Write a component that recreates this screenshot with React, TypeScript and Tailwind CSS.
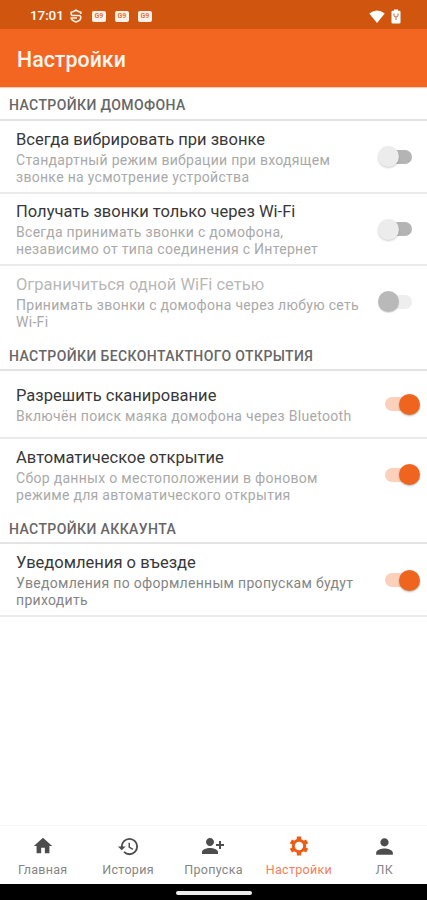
import clsx from "clsx";
import type { ReactNode } from "react";
import { MdHistory, MdHome, MdPerson, MdPersonAddAlt1 } from "react-icons/md";

type SwitchState = "off" | "on" | "disabled";

function Switch({ state }: { state: SwitchState }) {
  const on = state === "on";
  return (
    <div className={clsx("flex shrink-0 items-center", on ? "mr-[7px] w-[35px] flex-row-reverse" : "mr-[15px] w-[34px]")}>
      <div
        className={clsx(
          "relative z-10 size-[21px] shrink-0 rounded-full",
          on && "bg-[#ef651f] shadow-[0_1px_2px_rgba(0,0,0,0.3)]",
          state === "off" && "bg-[#ececec] shadow-[0_1px_2px_rgba(0,0,0,0.2)]",
          state === "disabled" && "bg-[#b9b9b9] shadow-[0_1px_1px_rgba(0,0,0,0.15)]",
        )}
      />
      <div
        className={clsx(
          "h-[14px] shrink-0 rounded-full",
          on ? "-mr-[10px] w-[24px] bg-[#fcd0bb]" : "-ml-[10px] w-[23px]",
          state === "off" && "bg-[#b4b4b4]",
          state === "disabled" && "bg-[#eeeeee]",
        )}
      />
    </div>
  );
}

function Section({ title, className, children }: { title: string; className: string; children: ReactNode }) {
  return (
    <section>
      <h2 className={clsx("border-b-2 border-[#e3e3e3] pl-[9px] text-[14px] leading-4 font-medium tracking-[0.4px] whitespace-nowrap text-[#666666]", className)}>
        {title}
      </h2>
      {children}
    </section>
  );
}

type RowProps = {
  title: string;
  lines: string[];
  state: SwitchState;
  className: string;
  titleClass?: string;
  textClass?: string;
};

function Row({ title, lines, state, className, titleClass = "text-[#383838]", textClass = "text-[#a9a9a9]" }: RowProps) {
  return (
    <div className={clsx("flex items-center justify-between pl-4", className)}>
      <div className="pt-px whitespace-nowrap">
        <p className={clsx("mb-px text-[16.5px] leading-[22px] tracking-[0.02px]", titleClass)}>{title}</p>
        {lines.map((line) => (
          <p key={line} className={clsx("text-[14px] leading-[17px] tracking-[0.3px]", textClass)}>
            {line}
          </p>
        ))}
      </div>
      <Switch state={state} />
    </div>
  );
}

function GearIcon() {
  return (
    <svg viewBox="0 0 20 20" className="size-5" fill="none" stroke="currentColor">
      <circle cx="10" cy="10" r="5.7" strokeWidth="3" />
      <path
        d="M10 3.8V.5M10 16.2v3.3M4.6 6.9 1.9 5.3M15.4 13.1l2.7 1.6M15.4 6.9l2.7-1.6M4.6 13.1l-2.7 1.6"
        strokeWidth="4.4"
      />
    </svg>
  );
}

const tabs = [
  { label: "Главная", icon: <MdHome size={22} /> },
  { label: "История", icon: <MdHistory size={23} /> },
  { label: "Пропуска", icon: <MdPersonAddAlt1 size={24} /> },
  { label: "Настройки", icon: <GearIcon />, active: true },
  { label: "ЛК", icon: <MdPerson size={25} /> },
];

function Badge() {
  return (
    <span className="flex h-[11px] w-[14px] items-center justify-center rounded-[2px] bg-[#fff1e8] text-[7px] leading-none font-bold text-[#d9773f]">
      G9
    </span>
  );
}

export default function App() {
  return (
    <div className="flex h-[900px] w-[427px] flex-col overflow-hidden bg-white font-[Roboto,sans-serif]">
      <div className="flex h-[29px] shrink-0 items-center bg-[#d0560f] pt-[3px] pr-[26px] pl-[30px] text-white">
        <span className="w-[40px] text-[13.5px] leading-none font-medium tracking-[-0.1px] whitespace-nowrap">17:01</span>
        <svg viewBox="0 0 12 14" className="mr-[10px] h-[14px] w-3" fill="none" stroke="#fff1e8" strokeWidth="1.6">
          <path d="M10.8 5V3.2Q8.4 3 6 1.2 3.6 3 1.2 3.2V5q0 1.5 1.8 1.5h6q1.8 0 1.8 1.9Q10.8 11.5 6 12.9 1.6 11.6 1.2 9H7" />
        </svg>
        <div className="flex gap-[9px]">
          <Badge />
          <Badge />
          <Badge />
        </div>
        <svg viewBox="0 0 16 13" className="ml-auto h-[13px] w-4" fill="currentColor">
          <path d="M.3 3.6Q8-2.8 15.7 3.6L8 13z" />
        </svg>
        <svg viewBox="0 0 10 15" className="ml-[6px] h-[15px] w-[10px]">
          <path d="M3 .5h4v1.3h1.5q1 0 1 1V13.5q0 1-1 1h-7q-1 0-1-1V2.8q0-1 1-1H3z" fill="#fff" />
          <path d="M3 4.5v1.7q0 1.6 2 1.6t2-1.6V4.5M5 7.8V11" fill="none" stroke="#c98a66" strokeWidth="1.2" />
        </svg>
      </div>
      <header className="flex h-[58px] shrink-0 items-center bg-[#f36621] pt-[3px] pl-[17px] shadow-[0_1px_1px_rgba(243,102,33,0.35)]">
        <h1 className="text-[21.3px] leading-6 font-medium tracking-[0.05px] text-[#fff6f0]">Настройки</h1>
      </header>

      <main className="flex-1">
        <Section title="НАСТРОЙКИ ДОМОФОНА" className="h-[34px] pt-[10px]">
          <Row
            className="h-[73px] border-b-2 border-[#ebebeb]"
            title="Всегда вибрировать при звонке"
            lines={["Стандартный режим вибрации при входящем", "звонке на усмотрение устройства"]}
            state="off"
          />
          <Row
            className="h-[72px] border-b-2 border-[#ebebeb]"
            title="Получать звонки только через Wi-Fi"
            lines={["Всегда принимать звонки с домофона,", "независимо от типа соединения с Интернет"]}
            state="off"
          />
          <Row
            className="h-[71px]"
            title="Ограничиться одной WiFi сетью"
            lines={["Принимать звонки с домофона через любую сеть", "Wi-Fi"]}
            state="disabled"
            titleClass="text-[#b8b8b8]"
          />
        </Section>
        <Section title="НАСТРОЙКИ БЕСКОНТАКТНОГО ОТКРЫТИЯ" className="h-[34px] pt-[11px]">
          <Row
            className="h-[68px] border-b-2 border-[#ebebeb]"
            title="Разрешить сканирование"
            lines={["Включён поиск маяка домофона через Bluetooth"]}
            state="on"
          />
          <Row
            className="h-[71px]"
            title="Автоматическое открытие"
            lines={["Сбор данных о местоположении в фоновом", "режиме для автоматического открытия"]}
            state="on"
          />
        </Section>
        <Section title="НАСТРОЙКИ АККАУНТА" className="h-[34px] pt-[11px]">
          <Row
            className="h-[73px] border-b-2 border-[#ebebeb] pt-px"
            title="Уведомления о въезде"
            lines={["Уведомления по оформленным пропускам будут", "приходить"]}
            state="on"
            textClass="text-[#858585]"
          />
        </Section>
      </main>

      <nav className="grid h-[59px] shrink-0 grid-cols-5 border-t border-[#f7f7f7]">
        {tabs.map((tab) => (
          <div
            key={tab.label}
            className={clsx("flex flex-col items-center pt-2", tab.active ? "text-[#ee5c14]" : "text-[#4d4d4d]")}
          >
            <div className="flex h-6 items-center">{tab.icon}</div>
            <span
              className={clsx(
                "mt-1 text-[12.5px] leading-4 tracking-[0.3px] whitespace-nowrap",
                tab.active ? "text-[#f58058]" : "text-[#858585]",
              )}
            >
              {tab.label}
            </span>
          </div>
        ))}
      </nav>
      <div className="flex h-4 shrink-0 justify-center bg-black pt-[7px]">
        <div className="h-[4px] w-[76px] rounded-full bg-[#ececec]" />
      </div>
    </div>
  );
}
